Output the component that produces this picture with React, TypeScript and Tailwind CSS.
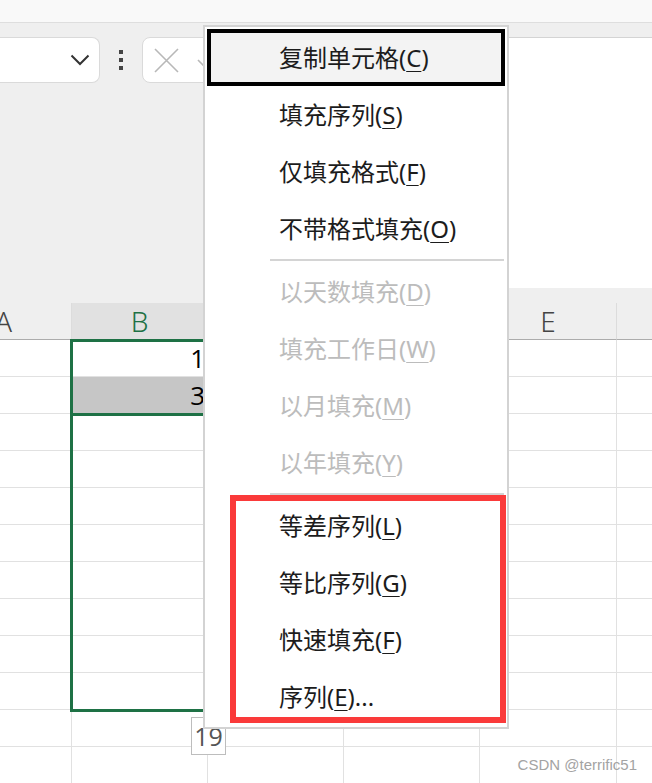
import React from "react";

type Item = { label: string; key: string; tail?: string; disabled?: boolean };

const groupA: Item[] = [
  { label: "复制单元格", key: "C" },
  { label: "填充序列", key: "S" },
  { label: "仅填充格式", key: "F" },
  { label: "不带格式填充", key: "O" },
];
const groupB: Item[] = [
  { label: "以天数填充", key: "D", disabled: true },
  { label: "填充工作日", key: "W", disabled: true },
  { label: "以月填充", key: "M", disabled: true },
  { label: "以年填充", key: "Y", disabled: true },
];
const groupC: Item[] = [
  { label: "等差序列", key: "L" },
  { label: "等比序列", key: "G" },
  { label: "快速填充", key: "F" },
  { label: "序列", key: "E", tail: "..." },
];

const cols = ["A", "B", "C", "D", "E", "F"];
const rows = Array.from({ length: 12 }, (_, i) => i);

function MenuLabel({ item }: { item: Item }) {
  return (
    <span className={item.disabled ? "text-[#bcbcbc]" : "text-[#1c1c1c]"}>
      {item.label}(
      <span className="underline decoration-1 underline-offset-[4px]">{item.key}</span>)
      {item.tail}
    </span>
  );
}

function MenuRow({ item, active }: { item: Item; active?: boolean }) {
  if (active) {
    return (
      <div className="flex h-[57px] items-center border-4 border-black bg-[#f3f3f3] pl-[68px]">
        <MenuLabel item={item} />
      </div>
    );
  }
  return (
    <div className="flex h-[57px] items-center pl-[72px]">
      <MenuLabel item={item} />
    </div>
  );
}

function Separator() {
  return (
    <div className="flex h-[6px] items-center pl-[63px] pr-[1px]">
      <div className="h-[2px] w-full bg-[#d4d4d4]" />
    </div>
  );
}

export default function App() {
  return (
    <div
      className="relative h-[783px] w-[652px] overflow-hidden bg-white"
      style={{ fontFamily: '"Noto Sans", "Noto Sans CJK SC", sans-serif' }}
    >
      {/* title strip */}
      <div className="h-[23px] border-b border-[#dedede] bg-[#f9f9f9] shadow-[0_1px_2px_rgba(0,0,0,0.06)]" />

      {/* formula bar area */}
      <div className="h-[280px] bg-[#efefef] pt-[14px]">
        <div className="flex items-start">
          <div className="flex h-[46px] w-[100px] items-center justify-end rounded-r-[8px] border border-l-0 border-[#dadada] bg-white pr-[9px]">
            <svg width="20" height="12" viewBox="0 0 20 12">
              <polyline points="1.5,1.5 10,10 18.5,1.5" fill="none" stroke="#333" strokeWidth="2" />
            </svg>
          </div>
          <div className="flex h-[46px] w-[42px] flex-col items-center justify-center gap-[4px]">
            <div className="h-[4px] w-[4px] bg-[#444]" />
            <div className="h-[4px] w-[4px] bg-[#444]" />
            <div className="h-[4px] w-[4px] bg-[#444]" />
          </div>
          <div className="flex h-[46px] w-[118px] items-center gap-[18px] rounded-[8px] border border-[#dadada] bg-white pl-[11px]">
            <svg width="25" height="25" viewBox="0 0 25 25">
              <path d="M1 1 L24 24 M24 1 L1 24" stroke="#b8b8b8" strokeWidth="1.6" fill="none" />
            </svg>
            <svg width="20" height="16" viewBox="0 0 20 16">
              <polyline points="1,8 7,14 19,1" fill="none" stroke="#b8b8b8" strokeWidth="1.6" />
            </svg>
          </div>
          <div className="ml-[8px] h-[251px] flex-1 rounded-tl-[8px] border-l border-t border-[#d4d4d4] bg-white" />
        </div>
      </div>

      {/* grid */}
      <div className="ml-[-64px] w-[816px]">
        <div className="grid h-[37px] grid-cols-[136px_136px_136px_136px_137px_136px] bg-[#efefef]">
          {cols.map((c) => (
            <div
              key={c}
              className={`flex items-center justify-center border-b border-r border-b-[#acacac] border-r-[#dcdcdc] text-[28px] font-light leading-none ${
                c === "B" ? "bg-[#e1e1e1] text-[#1e7145]" : "text-[#444]"
              }`}
            >
              {c}
            </div>
          ))}
        </div>
        {rows.map((r) => (
          <div key={r} className="grid h-[37px] grid-cols-[136px_136px_136px_136px_137px_136px]">
            {cols.map((c) => (
              <div
                key={c}
                className={`flex items-center justify-end border-b border-r border-[#e1e1e1] pr-[2px] text-[26px] leading-none text-black ${
                  c === "B" && r === 1 ? "bg-[#c6c6c6]" : ""
                }`}
                style={{ fontFamily: '"Open Sans", sans-serif' }}
              >
                {c === "B" && r === 0 ? "1" : c === "B" && r === 1 ? "3" : ""}
              </div>
            ))}
          </div>
        ))}
      </div>

      {/* selection outline */}
      <div className="absolute left-[70px] top-[339px] h-[373px] w-[150px] border-[3px] border-[#1e7145]" />
      <div className="absolute left-[70px] top-[413px] h-[3px] w-[150px] bg-[#1e7145]" />

      {/* fill tooltip */}
      <div
        className="absolute left-[191px] top-[717px] flex h-[38px] w-[35px] items-center justify-center border border-[#bdbdbd] bg-white text-[25px] leading-none text-[#555]"
        style={{ fontFamily: '"Open Sans", sans-serif' }}
      >
        19
      </div>

      {/* context menu */}
      <div className="absolute left-[203px] top-[25px] w-[306px] border-2 border-[#d3d3d3] bg-white p-[2px] text-[24px] leading-none">
        {groupA.map((it, i) => (
          <MenuRow key={it.label} item={it} active={i === 0} />
        ))}
        <Separator />
        {groupB.map((it) => (
          <MenuRow key={it.label} item={it} />
        ))}
        <Separator />
        {groupC.map((it) => (
          <MenuRow key={it.label} item={it} />
        ))}
      </div>

      {/* red annotation */}
      <div className="absolute left-[230px] top-[495px] h-[228px] w-[276px] border-[6px] border-[#fa3a3a]" />

      <div
        className="absolute right-[15px] top-[757px] text-[15px] leading-none text-[#a3a3a3]"
        style={{ fontFamily: '"Liberation Sans", Arial, sans-serif' }}
      >
        CSDN @terrific51
      </div>
    </div>
  );
}
